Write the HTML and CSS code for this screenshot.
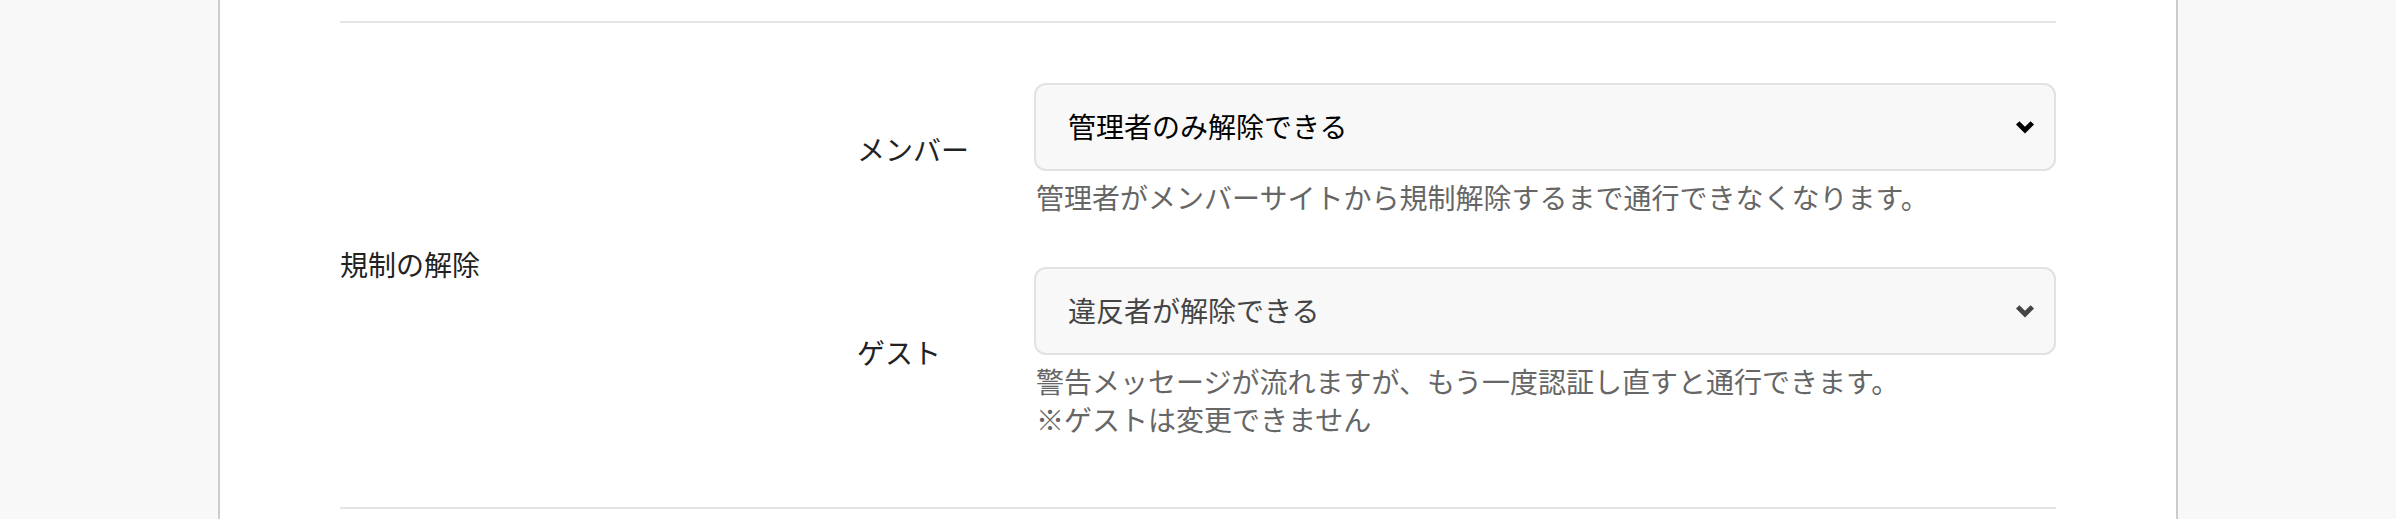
FILE: index.html
```html
<!DOCTYPE html>
<html lang="ja">
<head>
<meta charset="utf-8">
<title>規制の解除</title>
<link rel="stylesheet" href="styles.css">
</head>
<body>
<main class="panel">
  <section class="row">
    <div class="row-title">規制の解除</div>
    <div class="fields">
      <div class="field">
        <div class="field-label">メンバー</div>
        <div class="field-body">
          <div class="select">
            <span class="select-value">管理者のみ解除できる</span>
            <svg class="chevron" viewBox="0 0 18 13" width="18" height="13" aria-hidden="true"><polygon fill="currentColor" points="0,3.6 3.4,0.2 9,5.8 14.6,0.2 18,3.6 9,12.6"/></svg>
          </div>
          <p class="help">管理者がメンバーサイトから規制解除するまで通行できなくなります。</p>
        </div>
      </div>
      <div class="field">
        <div class="field-label">ゲスト</div>
        <div class="field-body">
          <div class="select select-disabled">
            <span class="select-value">違反者が解除できる</span>
            <svg class="chevron" viewBox="0 0 18 13" width="18" height="13" aria-hidden="true"><polygon fill="currentColor" points="0,3.6 3.4,0.2 9,5.8 14.6,0.2 18,3.6 9,12.6"/></svg>
          </div>
          <p class="help">警告メッセージが流れますが、もう一度認証し直すと通行できます。<br>※ゲストは変更できません</p>
        </div>
      </div>
    </div>
  </section>
</main>
</body>
</html>
```

FILE: styles.css
```css
* {
  box-sizing: border-box;
}

html, body {
  margin: 0;
  padding: 0;
}

body {
  background: #f8f8f8;
  font-family: "Noto Sans CJK JP", "Noto Sans", sans-serif;
  font-size: 28px;
  color: #222;
}

.panel {
  width: 1960px;
  min-height: 519px;
  margin: 0 auto;
  background: #fff;
  border-left: 2px solid #cccccc;
  border-right: 2px solid #cccccc;
  padding: 21px 120px 0;
}

.row {
  display: grid;
  grid-template-columns: 517px 1fr;
  align-items: center;
  border-top: 2px solid #e5e5e5;
  border-bottom: 2px solid #e5e5e5;
}

.row-title {
  line-height: 1.4;
  color: #222;
}

.fields {
  display: flex;
  flex-direction: column;
  gap: 51px;
  padding: 60px 0 69px;
}

.field {
  display: grid;
  grid-template-columns: 177px 1fr;
  align-items: center;
}

.field-label {
  line-height: 1.4;
  color: #222;
}

.select {
  display: flex;
  align-items: center;
  justify-content: space-between;
  height: 88px;
  padding: 0 20px 0 32px;
  background: #f8f8f8;
  border: 2px solid #e2e2e2;
  border-radius: 12px;
  color: #000;
}

.select-value {
  line-height: 1.4;
}

.chevron {
  display: block;
  flex: none;
}

.select-disabled {
  color: #444;
}

.help {
  margin: 7px 0 0 2px;
  line-height: 38px;
  color: #666;
}
```
